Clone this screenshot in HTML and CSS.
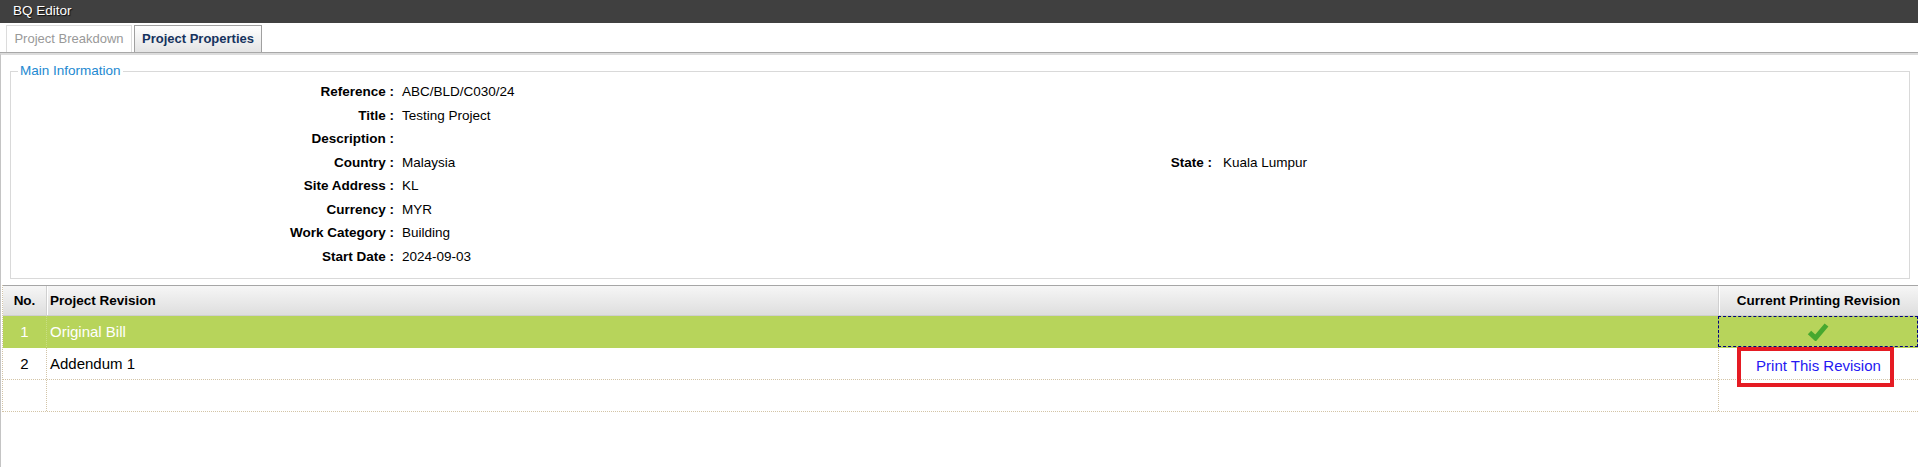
FILE: index.html
```html
<!DOCTYPE html>
<html lang="en">
<head>
    <meta charset="UTF-8">
    <title>BQ Editor</title>
    <link rel="stylesheet" href="styles.css">
</head>
<body>
    <div class="titlebar">BQ Editor</div>

    <div class="tabs">
        <div class="tab">Project Breakdown</div>
        <div class="tab active">Project Properties</div>
    </div>

    <div class="panel">
        <fieldset class="info">
            <legend>Main Information</legend>
            <div class="info-grid">
                <div class="label">Reference :</div><div class="value">ABC/BLD/C030/24</div><div></div><div></div>
                <div class="label">Title :</div><div class="value">Testing Project</div><div></div><div></div>
                <div class="label">Description :</div><div class="value"></div><div></div><div></div>
                <div class="label">Country :</div><div class="value">Malaysia</div><div class="label">State :</div><div class="value state">Kuala Lumpur</div>
                <div class="label">Site Address :</div><div class="value">KL</div><div></div><div></div>
                <div class="label">Currency :</div><div class="value">MYR</div><div></div><div></div>
                <div class="label">Work Category :</div><div class="value">Building</div><div></div><div></div>
                <div class="label">Start Date :</div><div class="value">2024-09-03</div><div></div><div></div>
            </div>
        </fieldset>

        <div class="grid">
            <div class="grid-row grid-head">
                <div class="cell num">No.</div>
                <div class="cell">Project Revision</div>
                <div class="cell center">Current Printing Revision</div>
            </div>
            <div class="grid-row selected">
                <div class="cell num">1</div>
                <div class="cell">Original Bill</div>
                <div class="cell center focused">
                    <svg class="check" width="22" height="19" viewBox="0 0 22 19">
                        <path d="M2.5 10.5 L8.5 16 L19.5 3" fill="none" stroke="#47a82f" stroke-width="5" stroke-linejoin="miter"/>
                    </svg>
                </div>
            </div>
            <div class="grid-row">
                <div class="cell num">2</div>
                <div class="cell">Addendum 1</div>
                <div class="cell center print-cell">
                    <a class="print-link" href="#">Print This Revision</a>
                    <span class="highlight"></span>
                </div>
            </div>
            <div class="grid-row">
                <div class="cell num"></div>
                <div class="cell"></div>
                <div class="cell"></div>
            </div>
        </div>
    </div>
</body>
</html>
```

FILE: styles.css
```css
* {
    margin: 0;
    padding: 0;
    box-sizing: border-box;
}

body {
    font-family: 'Liberation Sans', Arial, sans-serif;
    font-size: 13px;
    color: #000;
    background: #fff;
    height: 467px;
    overflow: hidden;
    display: flex;
    flex-direction: column;
}

.titlebar {
    height: 23px;
    line-height: 21px;
    padding-left: 13px;
    background: #404040;
    color: #fff;
    font-size: 13.5px;
    text-shadow: 1px 1px 1px rgba(0, 0, 0, 0.8);
}

/* tabs */
.tabs {
    display: flex;
    align-items: flex-end;
    gap: 2px;
    height: 30px;
    padding: 2px 0 0 6px;
    border-bottom: 1px solid #a8a8a8;
}

.tab {
    height: 27px;
    line-height: 25px;
    padding: 0 6px;
    width: 126px;
    border: 1px solid #dcdcdc;
    border-bottom: none;
    background: #fff;
    color: #999;
    text-align: center;
}

.tab.active {
    width: 128px;
    border-color: #a0a0a0;
    background: linear-gradient(#ffffff, #e4e4e4);
    color: #16335e;
    font-weight: bold;
}

.panel {
    flex: 1;
    border-top: 2px solid #dcdcdc;
    border-left: 1px solid #c4c4c4;
}

/* main information */
.info {
    margin: 8px 8px 0 9px;
    padding: 1px 0 10px 0;
    border: 1px solid #d9d9d9;
}

.info legend {
    margin-left: 7px;
    padding: 0 2px;
    font-size: 13.5px;
    line-height: 16px;
    color: #2389d1;
}

.info-grid {
    display: grid;
    grid-template-columns: 383px 729px 89px 1fr;
    grid-auto-rows: 23.5px;
    align-items: center;
    font-size: 13.5px;
}

.label {
    text-align: right;
    font-weight: bold;
}

.value {
    padding-left: 8px;
}

.value.state {
    padding-left: 11px;
}

/* revision grid */
.grid {
    margin: 6px 0 0 1px;
    border-left: 1px dotted #d3c4a6;
}

.grid-row {
    display: grid;
    grid-template-columns: 43px 1672px 200px;
    height: 32px;
    border-bottom: 1px dotted #d3c4a6;
    font-size: 15px;
}

.cell {
    display: flex;
    align-items: center;
    padding-left: 3px;
    border-left: 1px dotted #d3c4a6;
}

.cell:first-child {
    border-left: none;
}

.cell.num {
    justify-content: center;
    padding-left: 0;
}

.cell.center {
    justify-content: center;
    padding-left: 0;
}

.grid-head {
    height: 31px;
    border-top: 1px solid #a6a6a6;
    border-bottom: 1px solid #cfcfcf;
    background: linear-gradient(#f6f6f6, #dedede);
    font-size: 13.5px;
    font-weight: bold;
}

.grid-head .cell {
    border-left: 1px solid #d0d0d0;
    box-shadow: inset 1px 0 0 #fff;
}

.grid-head .cell:first-child {
    border-left: none;
    box-shadow: none;
}

.selected {
    background: #b7d45b;
    color: #fff;
    border-bottom-color: #b7d45b;
}

.selected .cell {
    border-left-color: #c9de84;
}

.selected .focused {
    border: 1px dashed #000080;
}

.check {
    display: block;
}

.print-cell {
    position: relative;
}

.print-link {
    color: #2418f2;
    text-decoration: none;
    padding-top: 3px;
}

/* annotation box over the link */
.highlight {
    position: absolute;
    left: 18px;
    top: -1px;
    width: 157px;
    height: 40px;
    border: 4px solid #e51b23;
    z-index: 2;
}
```
